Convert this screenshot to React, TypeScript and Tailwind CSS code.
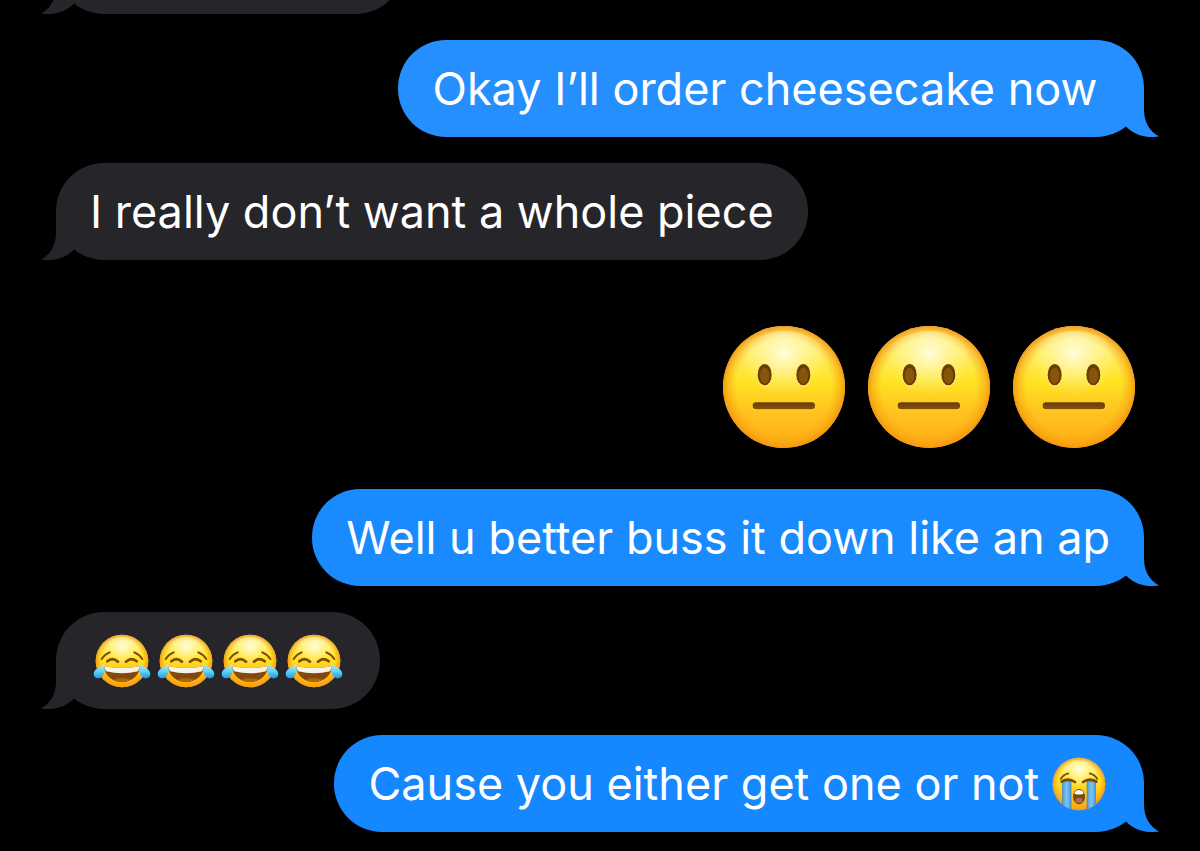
import React from "react";
import { clsx } from "clsx";

function EmojiDefs() {
  return (
    <svg className="absolute h-0 w-0" aria-hidden="true">
      <defs>
        <linearGradient id="face" x1="0" y1="0" x2="0" y2="1">
          <stop offset="0" stopColor="#fff08a" />
          <stop offset="0.2" stopColor="#fff070" />
          <stop offset="0.45" stopColor="#ffe324" />
          <stop offset="0.7" stopColor="#ffc41e" />
          <stop offset="1" stopColor="#ffac16" />
        </linearGradient>
        <radialGradient id="rim" cx="0.5" cy="0.5" r="0.5">
          <stop offset="0.78" stopColor="#f79f10" stopOpacity="0" />
          <stop offset="0.91" stopColor="#f79f10" stopOpacity="0.5" />
          <stop offset="1" stopColor="#f2940e" stopOpacity="0.9" />
        </radialGradient>
        <radialGradient id="shine" cx="0.5" cy="0.2" r="0.38">
          <stop offset="0" stopColor="#fffde0" stopOpacity="0.95" />
          <stop offset="0.45" stopColor="#fffac0" stopOpacity="0.55" />
          <stop offset="1" stopColor="#fff59a" stopOpacity="0" />
        </radialGradient>
        <linearGradient id="brown" x1="0" y1="0" x2="0" y2="1">
          <stop offset="0" stopColor="#6b3d04" />
          <stop offset="1" stopColor="#85520a" />
        </linearGradient>
        <linearGradient id="tear" x1="0" y1="0" x2="0" y2="1">
          <stop offset="0" stopColor="#a5f0fb" />
          <stop offset="0.5" stopColor="#62d2f8" />
          <stop offset="1" stopColor="#1e9be6" />
        </linearGradient>
        <linearGradient id="stream" x1="0" y1="0" x2="1" y2="0">
          <stop offset="0" stopColor="#4a9bdc" />
          <stop offset="0.5" stopColor="#7cc4f2" />
          <stop offset="1" stopColor="#4a9bdc" />
        </linearGradient>
        <clipPath id="sobFace">
          <circle cx="81" cy="81" r="79" />
        </clipPath>
        <clipPath id="joyMouth">
          <path d="M36 97Q90 107 144 97C142 126 118 144 90 144C62 144 38 126 36 97Z" />
        </clipPath>
      </defs>
    </svg>
  );
}

function NeutralFace() {
  return (
    <svg viewBox="0 0 366 366" className="h-[122px] w-[122px]" role="img" aria-label="neutral face">
      <circle cx="183" cy="183" r="183" fill="url(#face)" />
      <circle cx="183" cy="183" r="183" fill="url(#rim)" />
      <circle cx="183" cy="183" r="168" fill="url(#shine)" />
      <ellipse cx="125" cy="149" rx="22" ry="33" fill="#fff27a" opacity="0.7" />
      <ellipse cx="241" cy="149" rx="22" ry="33" fill="#fff27a" opacity="0.7" />
      <ellipse cx="125" cy="146" rx="21" ry="32" fill="#6b3d04" />
      <ellipse cx="241" cy="146" rx="21" ry="32" fill="#6b3d04" />
      <ellipse cx="125" cy="149" rx="14" ry="24" fill="#87560a" />
      <ellipse cx="241" cy="149" rx="14" ry="24" fill="#87560a" />
      <rect x="88" y="231" width="189" height="22" rx="11" fill="#ffe14a" opacity="0.7" />
      <rect x="89" y="229" width="187" height="21" rx="10" fill="url(#brown)" />
    </svg>
  );
}

function JoyFace() {
  return (
    <svg viewBox="0 0 180 162" className="h-[54px] w-[60px]" role="img" aria-label="face with tears of joy">
      <circle cx="90" cy="81" r="79" fill="url(#face)" />
      <circle cx="90" cy="81" r="79" fill="url(#rim)" />
      <circle cx="90" cy="81" r="72" fill="url(#shine)" />
      <g fill="none" stroke="#7d4a06" strokeLinecap="round">
        <path d="M29 75Q38 61 53 55M127 55Q142 61 151 75" strokeWidth="6" />
        <path d="M46 82Q61 68 78 83M102 83Q119 68 134 82" strokeWidth="8" />
      </g>
      <g clipPath="url(#joyMouth)">
        <rect x="30" y="90" width="120" height="60" fill="#84490a" />
        <path d="M34 94H146L138 112Q90 124 42 112Z" fill="#f6f2ee" />
        <ellipse cx="90" cy="147" rx="36" ry="14" fill="#a8690c" />
      </g>
      <path
        d="M37 91C40 112 35 133 19 133C8 133 3 125 6 115C10 103 26 100 37 91Z"
        fill="url(#tear)"
      />
      <path
        d="M143 91C140 112 145 133 161 133C172 133 177 125 174 115C170 103 154 100 143 91Z"
        fill="url(#tear)"
      />
    </svg>
  );
}

function SobFace() {
  return (
    <svg viewBox="0 0 162 162" className="mr-1 h-[54px] w-[54px]" role="img" aria-label="loudly crying face">
      <circle cx="81" cy="81" r="79" fill="url(#face)" />
      <circle cx="81" cy="81" r="79" fill="url(#rim)" />
      <circle cx="81" cy="81" r="72" fill="url(#shine)" />
      <g clipPath="url(#sobFace)">
        <rect x="31" y="73" width="26" height="90" fill="url(#stream)" stroke="#3f86b8" strokeWidth="2" />
        <rect x="105" y="73" width="26" height="90" fill="url(#stream)" stroke="#3f86b8" strokeWidth="2" />
      </g>
      <g fill="none" stroke="#7d4a06" strokeLinecap="round">
        <path d="M26 66Q33 53 49 49M113 49Q129 53 136 66" strokeWidth="5" />
        <path d="M29 74Q49 61 69 75M93 75Q113 61 133 74" strokeWidth="8" />
      </g>
      <ellipse cx="81" cy="119" rx="18" ry="23" fill="#7d4508" />
      <path d="M67 110Q69 99 81 99Q93 99 95 110Q81 115 67 110Z" fill="#f8f6f2" />
      <ellipse cx="81" cy="130" rx="11" ry="8" fill="#a87058" />
    </svg>
  );
}

function Tail({ sent }: { sent: boolean }) {
  return (
    <svg
      viewBox="0 0 64 48"
      aria-hidden="true"
      className={clsx(
        "absolute bottom-0 h-12 w-16 fill-current",
        sent ? "-right-4" : "-left-4 -scale-x-100"
      )}
    >
      <path d="M48 0V20C48 33 53 42 63 47.5C50 49.5 38 46 30 37.5L0 0Z" />
    </svg>
  );
}

type BubbleProps = {
  sent?: boolean;
  color: string;
  className?: string;
  children?: React.ReactNode;
};

function Bubble({ sent = false, color, className, children }: BubbleProps) {
  return (
    <li className={clsx("flex", sent ? "justify-end" : "justify-start", className)}>
      <div className={clsx("relative rounded-[48px] bg-current px-[34px] py-5", color)}>
        <Tail sent={sent} />
        <div className="relative flex min-h-[57px] items-center whitespace-pre text-[45px] leading-[57px] text-white">
          {children}
        </div>
      </div>
    </li>
  );
}

export default function App() {
  return (
    <main className="min-h-screen overflow-hidden bg-black font-['Inter',sans-serif]">
      <EmojiDefs />
      <ul className="flex flex-col gap-[26px] px-14 pb-[19px]">
        {/* end of the previous message, scrolled off the top */}
        <Bubble color="text-[#26252a]" className="-mt-[83px]">
          <span className="w-[280px]" />
        </Bubble>
        <Bubble sent color="text-[#268fff]">
          {"Okay I’ll order cheesecake now "}
        </Bubble>
        <Bubble color="text-[#26252a]">I really don’t want a whole piece</Bubble>
        <li className="flex justify-end gap-[23px] pt-10 pr-[9px] pb-[15px]">
          <NeutralFace />
          <NeutralFace />
          <NeutralFace />
        </li>
        <Bubble sent color="text-[#1a8aff]">
          Well u better buss it down like an ap
        </Bubble>
        <Bubble color="text-[#26252a]">
          <span className="flex gap-1 px-0.5">
            <JoyFace />
            <JoyFace />
            <JoyFace />
            <JoyFace />
          </span>
        </Bubble>
        <Bubble sent color="text-[#1587ff]">
          {"Cause you either get one or not "}
          <SobFace />
        </Bubble>
      </ul>
    </main>
  );
}
